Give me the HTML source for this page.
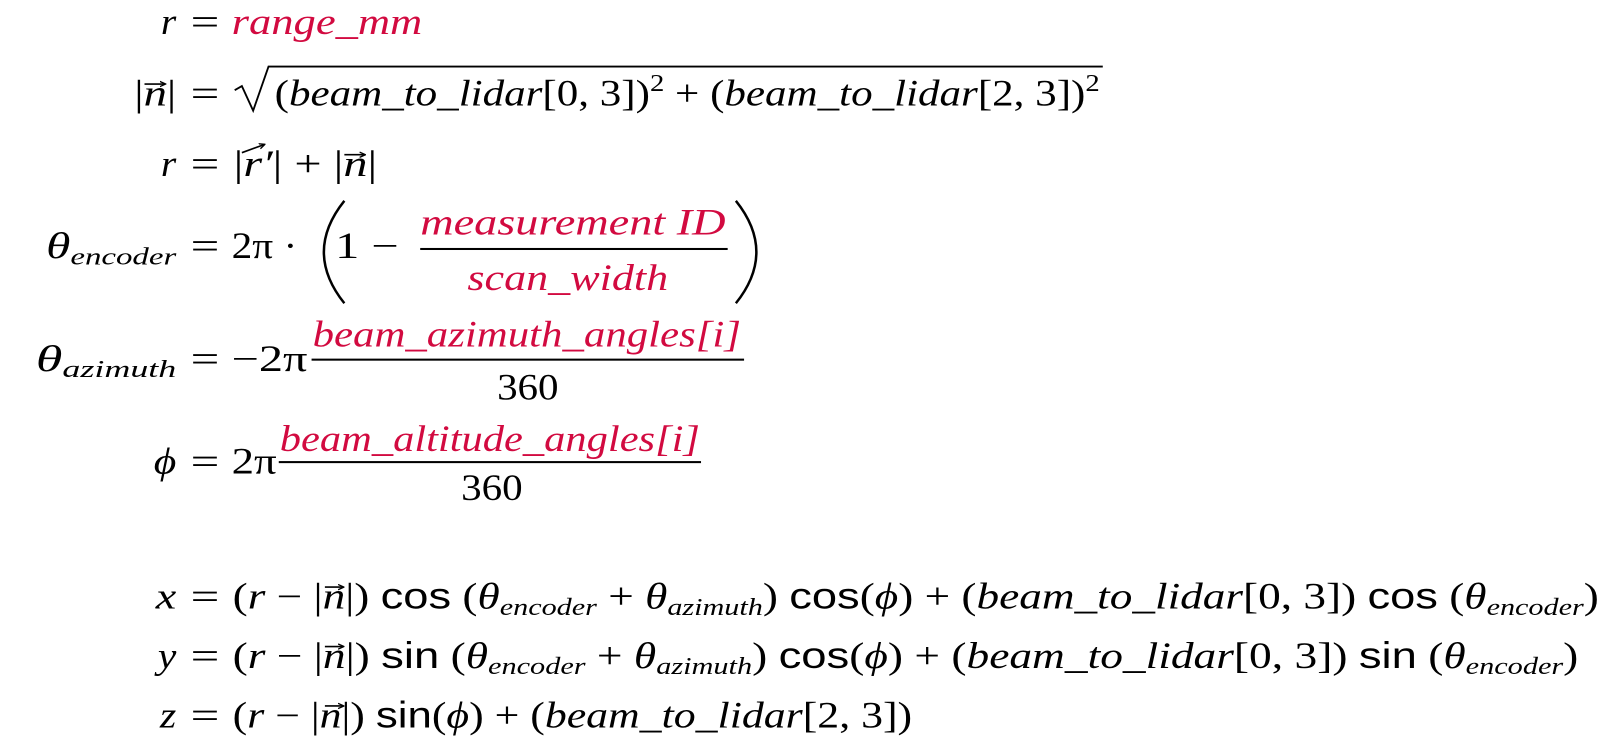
<!DOCTYPE html>
<html><head><meta charset="utf-8"><style>
html,body{margin:0;padding:0;background:#fff;width:1606px;height:749px;overflow:hidden}
svg{display:block}
text{font-family:"Liberation Serif",serif;font-size:36px;fill:#000}
.i{font-style:italic}
.r{fill:#d20a40}
.s{font-family:"Liberation Sans",sans-serif;font-style:normal}
.sub{font-size:24px;font-style:italic}
</style></head><body>
<svg width="1606" height="749" viewBox="0 0 1567 731" preserveAspectRatio="none" xmlns="http://www.w3.org/2000/svg">
<defs><marker id="a" viewBox="0 0 10 10" refX="8" refY="5" markerWidth="4" markerHeight="4" orient="auto"><path d="M0,1 L9,5 L0,9" fill="none" stroke="#000" stroke-width="2"/></marker></defs>
<!-- line 1 -->
<text x="157" y="33" class="i" textLength="15" lengthAdjust="spacingAndGlyphs">r</text>
<text x="186" y="33" textLength="28" lengthAdjust="spacingAndGlyphs">=</text>
<text x="226" y="33" class="i r" textLength="186" lengthAdjust="spacingAndGlyphs">range_mm</text>
<!-- line 2 -->
<text x="131" y="103" textLength="41" lengthAdjust="spacingAndGlyphs">|<tspan class="i">n</tspan>|</text>
<path d="M141,82 L161,82" stroke="#000" stroke-width="1.6" marker-end="url(#a)"/>
<text x="186" y="103" textLength="28" lengthAdjust="spacingAndGlyphs">=</text>
<path d="M229,88 L236,84 L247,108 L262,65 L1076,65" stroke="#000" stroke-width="1.8" fill="none"/>
<text x="268" y="103" textLength="805" lengthAdjust="spacingAndGlyphs">(<tspan class="i">beam_to_lidar</tspan>[0, 3])<tspan dy="-14" font-size="24">2</tspan><tspan dy="14"> + (</tspan><tspan class="i">beam_to_lidar</tspan>[2, 3])<tspan dy="-14" font-size="24">2</tspan></text>
<!-- line 3 -->
<text x="157" y="172" class="i" textLength="15" lengthAdjust="spacingAndGlyphs">r</text>
<text x="186" y="172" textLength="28" lengthAdjust="spacingAndGlyphs">=</text>
<text x="228" y="172" textLength="140" lengthAdjust="spacingAndGlyphs">|<tspan class="i">r′</tspan>| + |<tspan class="i">n</tspan>|</text>
<path d="M236,149 L258,141" stroke="#000" stroke-width="1.6" marker-end="url(#a)"/>
<path d="M336,151 L356,151" stroke="#000" stroke-width="1.6" marker-end="url(#a)"/>
<!-- line 4 -->
<text x="45" y="252" textLength="127" lengthAdjust="spacingAndGlyphs"><tspan class="i">θ</tspan><tspan class="sub" dy="6">encoder</tspan></text>
<text x="186" y="252" textLength="28" lengthAdjust="spacingAndGlyphs">=</text>
<text x="226" y="252" textLength="64" lengthAdjust="spacingAndGlyphs">2π ·</text>
<path d="M336,196 Q296,246 336,296" stroke="#000" stroke-width="2.4" fill="none"/>
<text x="327" y="252" textLength="62" lengthAdjust="spacingAndGlyphs">1 −</text>
<text x="410" y="229" class="i r" textLength="298" lengthAdjust="spacingAndGlyphs">measurement  ID</text>
<rect x="410" y="242" width="300" height="2" fill="#000"/>
<text x="456" y="283" class="i r" textLength="196" lengthAdjust="spacingAndGlyphs">scan_width</text>
<path d="M718,196 Q758,246 718,296" stroke="#000" stroke-width="2.4" fill="none"/>
<!-- line 5 -->
<text x="35" y="362" textLength="137" lengthAdjust="spacingAndGlyphs"><tspan class="i">θ</tspan><tspan class="sub" dy="6">azimuth</tspan></text>
<text x="186" y="362" textLength="28" lengthAdjust="spacingAndGlyphs">=</text>
<text x="226" y="362" textLength="74" lengthAdjust="spacingAndGlyphs">−2π</text>
<text x="305" y="338" class="i r" textLength="418" lengthAdjust="spacingAndGlyphs">beam_azimuth_angles[i]</text>
<rect x="304" y="350" width="422" height="2" fill="#000"/>
<text x="485" y="390" textLength="60" lengthAdjust="spacingAndGlyphs">360</text>
<!-- line 6 -->
<text x="150" y="462" class="i" textLength="22" lengthAdjust="spacingAndGlyphs">ϕ</text>
<text x="186" y="462" textLength="28" lengthAdjust="spacingAndGlyphs">=</text>
<text x="226" y="462" textLength="44" lengthAdjust="spacingAndGlyphs">2π</text>
<text x="273" y="440" class="i r" textLength="410" lengthAdjust="spacingAndGlyphs">beam_altitude_angles[i]</text>
<rect x="272" y="450" width="412" height="2" fill="#000"/>
<text x="450" y="488" textLength="60" lengthAdjust="spacingAndGlyphs">360</text>
<!-- line 7 -->
<text x="152" y="594" class="i" textLength="20" lengthAdjust="spacingAndGlyphs">x</text>
<text x="186" y="594" textLength="28" lengthAdjust="spacingAndGlyphs">=</text>
<text x="227" y="594" textLength="1333" lengthAdjust="spacingAndGlyphs">(<tspan class="i">r</tspan> − |<tspan class="i">n</tspan>|) <tspan class="s">cos</tspan> (<tspan class="i">θ</tspan><tspan class="sub" dy="6">encoder</tspan><tspan dy="-6"> + </tspan><tspan class="i">θ</tspan><tspan class="sub" dy="6">azimuth</tspan><tspan dy="-6">) </tspan><tspan class="s">cos</tspan>(<tspan class="i">ϕ</tspan>) + (<tspan class="i">beam_to_lidar</tspan>[0, 3]) <tspan class="s">cos</tspan> (<tspan class="i">θ</tspan><tspan class="sub" dy="6">encoder</tspan><tspan dy="-6">)</tspan></text>
<path d="M317,573 L335,573" stroke="#000" stroke-width="1.6" marker-end="url(#a)"/>
<!-- line 8 -->
<text x="154" y="652" class="i" textLength="18" lengthAdjust="spacingAndGlyphs">y</text>
<text x="186" y="652" textLength="28" lengthAdjust="spacingAndGlyphs">=</text>
<text x="227" y="652" textLength="1313" lengthAdjust="spacingAndGlyphs">(<tspan class="i">r</tspan> − |<tspan class="i">n</tspan>|) <tspan class="s">sin</tspan> (<tspan class="i">θ</tspan><tspan class="sub" dy="6">encoder</tspan><tspan dy="-6"> + </tspan><tspan class="i">θ</tspan><tspan class="sub" dy="6">azimuth</tspan><tspan dy="-6">) </tspan><tspan class="s">cos</tspan>(<tspan class="i">ϕ</tspan>) + (<tspan class="i">beam_to_lidar</tspan>[0, 3]) <tspan class="s">sin</tspan> (<tspan class="i">θ</tspan><tspan class="sub" dy="6">encoder</tspan><tspan dy="-6">)</tspan></text>
<path d="M317,631 L335,631" stroke="#000" stroke-width="1.6" marker-end="url(#a)"/>
<!-- line 9 -->
<text x="156" y="710" class="i" textLength="16" lengthAdjust="spacingAndGlyphs">z</text>
<text x="186" y="710" textLength="28" lengthAdjust="spacingAndGlyphs">=</text>
<text x="227" y="710" textLength="663" lengthAdjust="spacingAndGlyphs">(<tspan class="i">r</tspan> − |<tspan class="i">n</tspan>|) <tspan class="s">sin</tspan>(<tspan class="i">ϕ</tspan>) + (<tspan class="i">beam_to_lidar</tspan>[2, 3])</text>
<path d="M317,689 L335,689" stroke="#000" stroke-width="1.6" marker-end="url(#a)"/>
</svg>
</body></html>
